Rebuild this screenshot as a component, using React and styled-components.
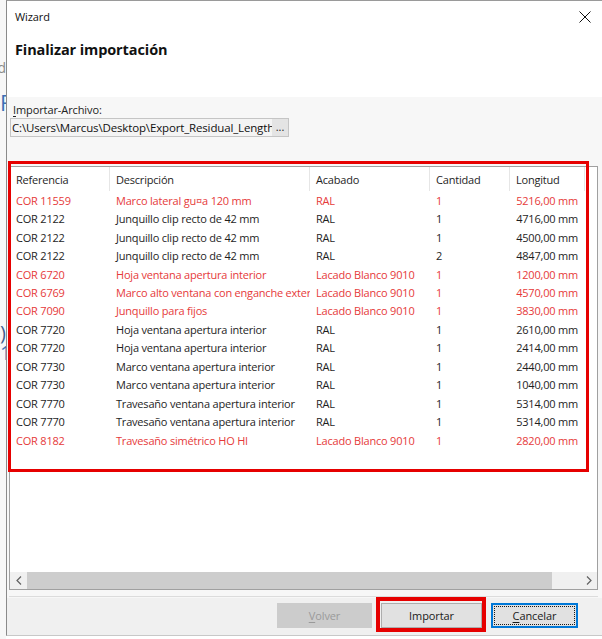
import React from "react";
import styled, { createGlobalStyle } from "styled-components";

const Global = createGlobalStyle`
  html, body { margin: 0; padding: 0; background: #ffffff; }
  body { font-family: "Open Sans", "Noto Sans", sans-serif; font-size: 11px; color: #1e1e1e; }
  * { box-sizing: border-box; }
`;

const Page = styled.div`
  display: flex;
  width: 602px;
  height: 639px;
  overflow: hidden;
  background: #ffffff;
`;

const BackStrip = styled.div`
  width: 6px;
  flex: none;
  display: flex;
  flex-direction: column;
  background: #f7f7f7;
  overflow: hidden;
`;

const BackText = styled.div`
  display: flex;
  justify-content: ${p => (p.$end ? "flex-end" : "flex-start")};
  white-space: nowrap;
  height: ${p => p.$h}px;
  margin-top: ${p => p.$mt}px;
  font-size: ${p => p.$size}px;
  line-height: ${p => p.$h}px;
  color: ${p => p.$color};
  font-family: "Open Sans", sans-serif;
`;

const Window = styled.div`
  flex: 1;
  height: 636px;
  display: flex;
  flex-direction: column;
  border-left: 1px solid #8a8a8a;
  border-top: 1px solid #9a9a9a;
  border-bottom: 1px solid #c8c8c8;
  background: #f7f7f7;
`;

const TitleBar = styled.div`
  height: 31px;
  flex: none;
  display: flex;
  align-items: center;
  justify-content: space-between;
  padding: 0 8px 0 8px;
  background: #ffffff;
  font-size: 11px;
  letter-spacing: -0.1px;
  color: #111;
`;

const CloseIcon = styled.svg`
  width: 12px;
  height: 12px;
  margin-right: 3px;
`;

const Header = styled.div`
  height: 65px;
  flex: none;
  background: #ffffff;
  padding: 8px 0 0 8px;
`;

const HeaderTitle = styled.div`
  font-size: 14.5px;
  font-weight: 700;
  letter-spacing: -0.1px;
  color: #111;
  line-height: 20px;
`;

const Body = styled.div`
  flex: 1;
  display: flex;
  flex-direction: column;
  padding: 5px 4px 0 2px;
  background: #f7f7f7;
`;

const FieldLabel = styled.div`
  font-size: 11px;
  line-height: 16px;
  padding-left: 4px;
  letter-spacing: -0.1px;
  color: #222;
  u { text-decoration: underline; text-underline-offset: 2px; }
`;

const FieldRow = styled.div`
  display: flex;
  width: 279px;
  height: 19px;
  margin-left: 1px;
  border: 1px solid #c5c5c5;
  background: #f4f4f4;
`;

const FieldText = styled.div`
  flex: 1;
  overflow: hidden;
  white-space: nowrap;
  font-size: 11.5px;
  line-height: 17px;
  padding-left: 1px;
  letter-spacing: -0.15px;
  color: #111;
`;

const DotsButton = styled.div`
  width: 16px;
  flex: none;
  background: #e4e4e4;
  text-align: center;
  font-size: 11px;
  line-height: 15px;
  color: #222;
`;

const ListView = styled.div`
  position: relative;
  margin-top: 29px;
  height: 424px;
  border: 1px solid #a0a0a0;
  background: #ffffff;
  display: flex;
  flex-direction: column;
`;

const Table = styled.div`
  flex: 1;
  overflow: hidden;
`;

const Row = styled.div`
  display: grid;
  grid-template-columns: 100px 200px 120px 80px 75px;
  height: ${p => (p.$head ? "24px" : "18.46px")};
  align-items: center;
  color: ${p => (p.$red ? "#e63a3a" : "#1e1e1e")};
  font-size: 11px;
  letter-spacing: -0.2px;
`;

const Cell = styled.div`
  height: 100%;
  display: flex;
  align-items: center;
  justify-content: ${p => (p.$right ? "flex-end" : "flex-start")};
  padding: 0 ${p => (p.$right ? "7px" : "0")} 0 6px;
  overflow: hidden;
  white-space: nowrap;
  border-right: ${p => (p.$head ? "1px solid #e6e6e6" : "none")};
`;

const Highlight = styled.div`
  position: absolute;
  left: -2px;
  top: -6px;
  width: 581px;
  height: 311px;
  border: 3px solid #e60000;
  pointer-events: none;
`;

const ScrollBar = styled.div`
  height: 17px;
  flex: none;
  display: flex;
  background: #f0f0f0;
`;

const ScrollArrow = styled.div`
  width: 17px;
  flex: none;
  display: flex;
  align-items: center;
  justify-content: center;
`;

const ScrollThumb = styled.div`
  width: 525px;
  flex: none;
  background: #cdcdcd;
`;

const ScrollTrack = styled.div`
  flex: 1;
`;

const Separator = styled.div`
  height: 1px;
  margin-top: 6px;
  background: #dcdcdc;
`;

const Footer = styled.div`
  flex: none;
  height: 37px;
  display: flex;
  justify-content: flex-end;
  align-items: flex-start;
  padding: 5px 24px 0 0;
  gap: 9px;
  background: #f0f0f0;
`;

const Button = styled.div`
  position: relative;
  width: ${p => p.$w}px;
  height: 25px;
  display: flex;
  align-items: center;
  justify-content: center;
  font-size: 11px;
  letter-spacing: -0.1px;
  background: ${p => (p.$disabled ? "#cccccc" : "#e1e1e1")};
  color: ${p => (p.$disabled ? "#9a9a9a" : "#1a1a1a")};
  border: ${p =>
    p.$focused ? "2px solid #0078d7" : p.$disabled ? "1px solid #cccccc" : "1px solid #adadad"};
  u { text-decoration: underline; text-underline-offset: 2px; }
`;

const FocusRing = styled.div`
  position: absolute;
  inset: 1px;
  border: 1px dotted #1a1a1a;
  pointer-events: none;
`;

const ButtonHighlight = styled.div`
  position: absolute;
  left: -6px;
  right: -5px;
  top: -7px;
  bottom: -5px;
  border: 4px solid #e60000;
  pointer-events: none;
`;

const rows = [
  ["COR 11559", "Marco lateral gu\u00a4a 120 mm", "RAL", "1", "5216,00 mm", true],
  ["COR 2122", "Junquillo clip recto de 42 mm", "RAL", "1", "4716,00 mm", false],
  ["COR 2122", "Junquillo clip recto de 42 mm", "RAL", "1", "4500,00 mm", false],
  ["COR 2122", "Junquillo clip recto de 42 mm", "RAL", "2", "4847,00 mm", false],
  ["COR 6720", "Hoja ventana apertura interior", "Lacado Blanco 9010", "1", "1200,00 mm", true],
  ["COR 6769", "Marco alto ventana con enganche exterior", "Lacado Blanco 9010", "1", "4570,00 mm", true],
  ["COR 7090", "Junquillo para fijos", "Lacado Blanco 9010", "1", "3830,00 mm", true],
  ["COR 7720", "Hoja ventana apertura interior", "RAL", "1", "2610,00 mm", false],
  ["COR 7720", "Hoja ventana apertura interior", "RAL", "1", "2414,00 mm", false],
  ["COR 7730", "Marco ventana apertura interior", "RAL", "1", "2440,00 mm", false],
  ["COR 7730", "Marco ventana apertura interior", "RAL", "1", "1040,00 mm", false],
  ["COR 7770", "Travesaño ventana apertura interior", "RAL", "1", "5314,00 mm", false],
  ["COR 7770", "Travesaño ventana apertura interior", "RAL", "1", "5314,00 mm", false],
  ["COR 8182", "Travesaño simétrico HO HI", "Lacado Blanco 9010", "1", "2820,00 mm", true],
];

const Chevron = ({ dir }) => (
  <svg width="6" height="9" viewBox="0 0 6 9">
    <path
      d={dir === "left" ? "M5 0.5 L1 4.5 L5 8.5" : "M1 0.5 L5 4.5 L1 8.5"}
      fill="none"
      stroke="#606060"
      strokeWidth="1.2"
    />
  </svg>
);

export default function App() {
  return (
    <>
      <Global />
      <Page>
        <BackStrip>
          <BackText $end $mt={58} $h={20} $size={14} $color="#8a8a8a">Ad</BackText>
          <BackText $mt={12} $h={24} $size={22} $color="#3c6fb5">F</BackText>
          <BackText $end $mt={209} $h={20} $size={20} $color="#3f5f8f">0)</BackText>
          <BackText $mt={0} $h={20} $size={20} $color="#3c6fb5">1</BackText>
        </BackStrip>
        <Window>
          <TitleBar>
            <span>Wizard</span>
            <CloseIcon viewBox="0 0 12 12">
              <path d="M0.5 0.5 L11.5 11.5 M11.5 0.5 L0.5 11.5" stroke="#111" strokeWidth="1" fill="none" />
            </CloseIcon>
          </TitleBar>
          <Header>
            <HeaderTitle>Finalizar importación</HeaderTitle>
          </Header>
          <Body>
            <FieldLabel>
              <u>I</u>mportar-Archivo:
            </FieldLabel>
            <FieldRow>
              <FieldText>C:\Users\Marcus\Desktop\Export_Residual_Lengths.csv</FieldText>
              <DotsButton>...</DotsButton>
            </FieldRow>
            <ListView>
              <Table>
                <Row $head>
                  <Cell $head>Referencia</Cell>
                  <Cell $head>Descripción</Cell>
                  <Cell $head>Acabado</Cell>
                  <Cell $head>Cantidad</Cell>
                  <Cell $head>Longitud</Cell>
                </Row>
                {rows.map((r, i) => (
                  <Row key={i} $red={r[5]}>
                    <Cell>{r[0]}</Cell>
                    <Cell>{r[1]}</Cell>
                    <Cell>{r[2]}</Cell>
                    <Cell>{r[3]}</Cell>
                    <Cell $right>{r[4]}</Cell>
                  </Row>
                ))}
              </Table>
              <ScrollBar>
                <ScrollArrow>
                  <Chevron dir="left" />
                </ScrollArrow>
                <ScrollThumb />
                <ScrollTrack />
                <ScrollArrow>
                  <Chevron dir="right" />
                </ScrollArrow>
              </ScrollBar>
              <Highlight />
            </ListView>
            <Separator />
          </Body>
          <Footer>
            <Button $w={95} $disabled>
              <span><u>V</u>olver</span>
            </Button>
            <Button $w={101}>
              Importar
              <ButtonHighlight />
            </Button>
            <Button $w={87} $focused>
              <span><u>C</u>ancelar</span>
              <FocusRing />
            </Button>
          </Footer>
        </Window>
      </Page>
    </>
  );
}
